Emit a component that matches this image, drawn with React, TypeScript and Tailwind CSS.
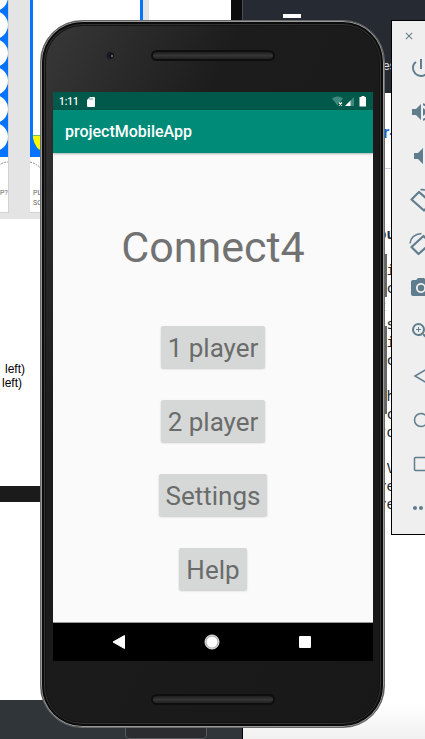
import React from "react";
import {
  MdClose,
  MdPhotoCamera,
  MdPowerSettingsNew,
  MdVolumeDown,
  MdVolumeUp,
  MdZoomIn,
} from "react-icons/md";

const boardRows = [0, 1, 2, 3, 4, 5];

const codeLines = ["", " i", " c", "t", " s", " i", " c", "", " h", " c", "to", "", " V", "re", "re"];

function BoardColumn() {
  return (
    <div className="flex h-[157px] w-2 shrink-0 flex-col overflow-hidden bg-[#0474ff]">
      <svg width="8" height="157">
        {boardRows.map((row) => (
          <circle key={row} cx="-6" cy={-3 + row * 28} r="14" fill="#ffffff" />
        ))}
      </svg>
    </div>
  );
}

function BoardWindow() {
  return (
    <div className="flex h-[219px] w-[231px] items-start bg-[#e4e4e4] font-[Roboto,sans-serif] text-[7px] leading-[10px] text-[#666]">
      <div className="h-[213px] w-[9px] overflow-hidden border-b border-r border-[#d2d2d2] bg-white">
        <BoardColumn />
        <svg width="8" height="31">
          <path d="M-6 19a14 14 0 0 1 14-14" fill="none" stroke="#8a8a8a" strokeDasharray="2 1" />
        </svg>
        <p>P?</p>
      </div>
      <div className="ml-[21px] h-[213px] w-[113px] border-b border-[#d2d2d2] bg-white">
        <svg width="113" height="188">
          <rect x="0" y="0" width="3" height="157" fill="#0474ff" />
          <rect x="3" y="136" width="12" height="21" fill="#0474ff" />
          <path d="M3 136h12v16Q5 150 3 138z" fill="#f8f800" />
          <rect x="3" y="135" width="12" height="1" fill="#6bbf5a" />
          <path d="M0 162q8 2 13 9" fill="none" stroke="#8a8a8a" strokeDasharray="2 1" />
          <rect x="110" y="0" width="3" height="157" fill="#0474ff" />
        </svg>
        <p className="pl-[3px]">
          PLA
          <br />
          SCR
        </p>
      </div>
      <div className="ml-[6px] h-[213px] flex-1 bg-white" />
    </div>
  );
}

function Backdrop() {
  return (
    <div className="absolute inset-0 flex overflow-hidden bg-white" aria-hidden="true">
      <div className="flex w-[243px] shrink-0 flex-col">
        <div className="flex">
          <BoardWindow />
          <div className="h-[93px] flex-1 border-r border-[#4a4d52] bg-[#0c0c0c]" />
        </div>
        <div className="flex h-[267px] flex-col items-start pt-[143px] font-['Liberation_Sans',Arial,sans-serif] text-[12px] leading-[14px] text-black">
          <span className="w-[25px] text-right">left)</span>
          <span className="w-[22px] text-right">left)</span>
        </div>
        <div className="h-4 bg-[#1b1b1b]" />
        <div className="mt-auto flex h-10 flex-col items-end justify-end border-r border-black bg-[#2f3538] pb-px pr-[35px]">
          <div className="h-8 w-[82px] rounded-sm border border-[#55595c] bg-[#2b2c30]" />
        </div>
      </div>

      <div className="flex flex-1 flex-col">
        <div className="flex h-[93px] flex-col bg-[#252a33] pt-[14px] font-['Liberation_Sans',Arial,sans-serif] text-[12px] leading-4 text-[#e4e4e4]">
          <div className="ml-10 h-1 w-[18px] bg-white" />
          <span className="ml-[140px] mt-10">es</span>
        </div>
        <div className="flex h-[76px] border-b border-[#cdd3e0] pl-[140px] pt-8">
          <a
            href="#listing"
            tabIndex={-1}
            className="font-['Liberation_Sans',Arial,sans-serif] text-[16px] font-bold leading-4 text-[#0b5fd8]"
          >
            r-
          </a>
        </div>
        <div className="pl-[135px] pt-14 font-['DejaVu_Sans_Mono',monospace] text-[14px] leading-[18px] text-[#24292e]">
          <p className="font-bold">ou</p>
          {codeLines.map((line, i) => (
            <p key={i} className="h-[18px] whitespace-pre">
              {line}
            </p>
          ))}
        </div>
        <div className="mt-auto h-9 bg-linear-to-b from-white to-[#f0f0f0]" />
      </div>
    </div>
  );
}

function StatusBar() {
  return (
    <div className="flex h-[18px] items-center bg-[#00594a] px-[6px] pt-px text-white">
      <span className="text-[10px] font-medium leading-4">1:11</span>
      <svg className="ml-2" width="8" height="10" viewBox="0 0 8 10">
        <path d="M3 0h4a1 1 0 0 1 1 1v8a1 1 0 0 1-1 1H1a1 1 0 0 1-1-1V3z" fill="#fff" />
        <path d="M3 1v2M5 1v2" stroke="#00574b" strokeWidth="0.6" />
      </svg>
      <svg className="ml-auto" width="35" height="11" viewBox="0 0 35 11">
        <path d="M0 2.5Q5.500-1.500 11 2.500L5.500 9.500z" fill="#3f8a7f" />
        <path d="M6.500 6h4v4h-4z" fill="#00574b" />
        <path d="M7 6.500l3 3M10 6.500l-3 3" stroke="#fff" strokeWidth="1.200" />
        <path d="M22 1v9H13z" fill="#3f8a7f" />
        <path d="M18.500 4.500V10H13z" fill="#fff" />
        <path d="M29.500 0h3v1h1.500v9.500h-6.500V1h2z" fill="#fff" />
      </svg>
    </div>
  );
}

function MenuButton({ children }: { children: React.ReactNode }) {
  return (
    <button
      type="button"
      className="rounded-xs bg-[#d6d8d7] px-[7px] pt-[2px] text-[26px] leading-10 text-[#6a6c6b] shadow-[0_1px_2px_rgba(0,0,0,0.2)]"
    >
      {children}
    </button>
  );
}

function Slot() {
  return (
    <div className="h-[11px] w-[124px] rounded-full border-2 border-[#0e0e0e] bg-linear-to-b from-[#1d1d1d] via-[#363636] to-[#222]" />
  );
}

function Phone() {
  return (
    <section className="relative rounded-[42px] border border-[#6a6a6a] bg-linear-to-br from-[#393939] via-[#1c1c1c] via-30% to-[#181818] pb-[22px] pl-3 pr-[11px] pt-[29px] font-[Roboto,sans-serif] shadow-[inset_0_0_0_1px_#9a9a9a,inset_0_0_0_3px_#0b0b0b,inset_0_0_0_4px_#333,inset_0_0_0_5px_#141414]">
      <div className="absolute -right-[3px] top-[233px] h-[43px] w-[2px] bg-[#666]" />
      <div className="absolute -right-[3px] top-[305px] h-[88px] w-[2px] bg-[#666]" />
      <div className="grid grid-cols-[1fr_auto_1fr] items-center">
        <div className="ml-[52px] h-[11px] w-[11px] rounded-full border-2 border-[#2b2a2c] bg-[#17151f] pl-1 pt-[3px]">
          <div className="h-[2px] w-[2px] rounded-full bg-[#8d7274]" />
        </div>
        <Slot />
      </div>
      <div className="mt-[31px] bg-[#fafafa]">
        <StatusBar />
        <header className="flex h-[43px] items-center bg-[#008a78] px-3 pt-px shadow-[0_1px_2px_rgba(0,0,0,0.3)]">
          <h1 className="text-[16px] font-medium leading-5 text-white">projectMobileApp</h1>
        </header>
        <main className="flex flex-col items-center gap-8 border-b border-[#999] pb-8 pt-[68px]">
          <h2 className="mb-5 text-[43px] leading-[53px] text-[#727272]">Connect4</h2>
          <MenuButton>1 player</MenuButton>
          <MenuButton>2 player</MenuButton>
          <MenuButton>Settings</MenuButton>
          <MenuButton>Help</MenuButton>
        </main>
        <nav className="flex h-[38px] items-center justify-between bg-black pl-[58px] pr-[60px]">
          <button type="button" aria-label="Back">
            <svg width="16" height="16" viewBox="0 0 16 16">
              <path d="M13.500 1.500v13L2 8z" fill="#fff" stroke="#fff" strokeLinejoin="round" />
            </svg>
          </button>
          <button type="button" aria-label="Home">
            <svg width="16" height="16" viewBox="0 0 16 16">
              <circle cx="8" cy="8" r="7" fill="#aaa" stroke="#eee" />
              <circle cx="8" cy="8" r="5.500" fill="#fff" />
            </svg>
          </button>
          <button type="button" aria-label="Overview">
            <svg width="16" height="16" viewBox="0 0 16 16">
              <rect x="2" y="2" width="12" height="12" rx="1" fill="#fff" />
            </svg>
          </button>
        </nav>
      </div>
      <div className="mt-[33px] flex justify-center">
        <Slot />
      </div>
    </section>
  );
}

function Outline({ children }: { children: React.ReactNode }) {
  return (
    <svg width="24" height="24" viewBox="0 0 24 24" fill="none" stroke="currentColor" strokeWidth="1.500">
      {children}
    </svg>
  );
}

const tools: { label: string; icon: React.ReactNode }[] = [
  { label: "Power", icon: <MdPowerSettingsNew size={24} /> },
  { label: "Volume up", icon: <MdVolumeUp size={24} /> },
  { label: "Volume down", icon: <MdVolumeDown size={24} /> },
  {
    label: "Rotate left",
    icon: (
      <Outline>
        <path d="M2.500 11.500L10 4L22.500 15L15 22.500Z" strokeWidth="2.200" strokeLinejoin="round" />
        <path d="M11.500 1.800Q19 0.500 22.500 9" />
      </Outline>
    ),
  },
  {
    label: "Rotate right",
    icon: (
      <Outline>
        <path d="M2.500 15L14.500 4L22 11L9.500 22Z" strokeWidth="2.200" strokeLinejoin="round" />
        <path d="M1 11.500Q2 2.500 12.500 1.500" />
      </Outline>
    ),
  },
  { label: "Take screenshot", icon: <MdPhotoCamera size={24} /> },
  { label: "Zoom", icon: <MdZoomIn size={24} /> },
  {
    label: "Back",
    icon: (
      <Outline>
        <path d="M18 5v14L6 12z" />
      </Outline>
    ),
  },
  {
    label: "Home",
    icon: (
      <Outline>
        <circle cx="12" cy="12" r="6.500" />
      </Outline>
    ),
  },
  {
    label: "Overview",
    icon: (
      <Outline>
        <rect x="5.500" y="5.500" width="13" height="13" rx="1" />
      </Outline>
    ),
  },
  {
    label: "More",
    icon: (
      <Outline>
        <g fill="currentColor" stroke="none">
          <circle cx="6" cy="12" r="2" />
          <circle cx="12" cy="12" r="2" />
          <circle cx="18" cy="12" r="2" />
        </g>
      </Outline>
    ),
  },
];

function EmulatorToolbar() {
  return (
    <aside className="absolute -right-[26px] top-5 flex w-[60px] flex-col border border-black bg-[#efefef] pb-1 text-[#5f7d8c]">
      <button type="button" aria-label="Close" className="flex h-[25px] items-center pl-[11px] pt-1">
        <MdClose size={12} />
      </button>
      {tools.map((tool) => (
        <button
          key={tool.label}
          type="button"
          aria-label={tool.label}
          className="flex h-11 items-center justify-center"
        >
          {tool.icon}
        </button>
      ))}
    </aside>
  );
}

export default function App() {
  return (
    <div className="relative min-h-screen overflow-hidden px-10 pb-3 pt-5">
      <Backdrop />
      <Phone />
      <EmulatorToolbar />
    </div>
  );
}
